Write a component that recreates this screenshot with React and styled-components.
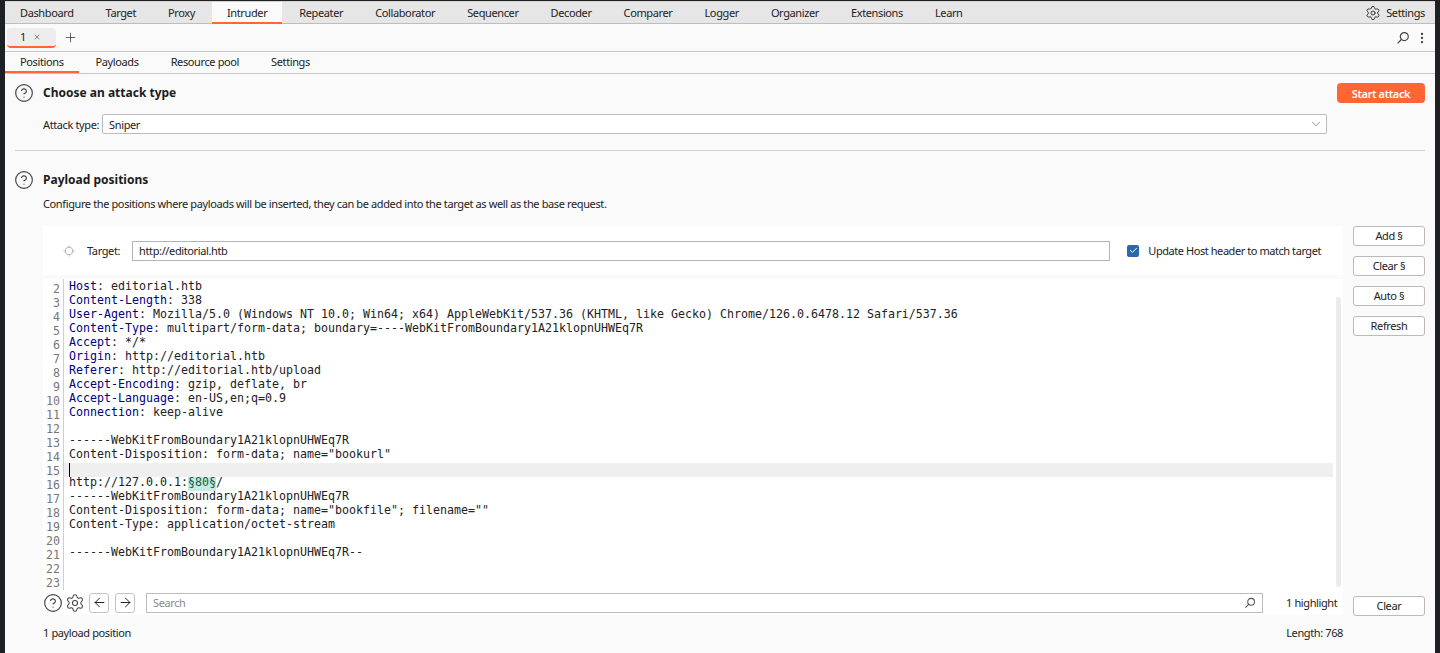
import React from 'react'
import styled, { createGlobalStyle } from 'styled-components'
import { ArrowLeft, ArrowRight, Check, ChevronDown, CircleHelp, EllipsisVertical, Plus, Settings, X } from 'lucide-react'

const Global = createGlobalStyle`
  html, body { margin: 0; padding: 0; background: #1f2023; overflow: hidden; }
  * { box-sizing: border-box; }
`

const Shell = styled.div`
  width: 1440px;
  height: 653px;
  padding: 1px 5px 0;
  font-family: "Noto Sans", sans-serif;
  font-size: 11px;
  letter-spacing: -0.38px;
  color: #222;
`
const Window = styled.div`
  height: 652px;
  background: #fafafa;
  display: flex;
  flex-direction: column;
`
const TopNav = styled.div`
  height: 23px;
  flex: none;
  display: flex;
  gap: 2px;
  background: #e6e6e6;
  border-top: 1px solid #d4d4d4;
  border-bottom: 1px solid #bdbdbd;
`
const NavTab = styled.div`
  padding: 0 15px;
  display: flex;
  align-items: center;
  height: 22px;
  background: ${p => (p.$active ? '#fafafa' : 'transparent')};
  border-bottom: ${p => (p.$active ? '2px solid #ff6633' : '2px solid transparent')};
`
const NavSettings = styled.div`
  margin-left: auto;
  display: flex;
  align-items: center;
  gap: 5px;
  padding-right: 10px;
`
const InstanceRow = styled.div`
  height: 28px;
  flex: none;
  display: flex;
  align-items: center;
  padding-left: 2px;
  border-bottom: 1px solid #c8c8c8;
`
const InstanceTab = styled.div`
  width: 49px;
  height: 20px;
  display: flex;
  align-items: center;
  padding-left: 13px;
  gap: 7px;
  background: #ededed;
  border-radius: 4px;
  border-bottom: 2px solid #ff6633;
`
const AddTab = styled.div`
  margin-left: 7px;
  display: flex;
  color: #333;
`
const InstanceTools = styled.div`
  margin-left: auto;
  display: flex;
  align-items: center;
  gap: 5px;
  padding-right: 6px;
  color: #444;
`
const SubNav = styled.div`
  height: 22px;
  flex: none;
  display: flex;
  gap: 2px;
  border-bottom: 1px solid #c8c8c8;
`
const SubTab = styled.div`
  padding: 0 15px;
  height: 21px;
  display: flex;
  align-items: center;
  border-bottom: ${p => (p.$active ? '2px solid #ff6633' : '2px solid transparent')};
`
const AttackSection = styled.div`
  flex: none;
  height: 77px;
  padding-top: 9px;
  margin: 0 10px;
  border-bottom: 1px solid #d2d2d2;
`
const HeadRow = styled.div`
  display: flex;
  align-items: center;
  height: 20px;
`
const HelpSlot = styled.div`
  width: 28px;
  margin: -1px 0 0 -1px;
  padding-right: 0;
  flex: none;
  display: flex;
  color: #444;
  & + div { margin-left: 1px; }
`
const Heading = styled.div`
  font-size: 12px;
  font-weight: 700;
  letter-spacing: 0;
  color: #1c1c1c;
  margin-top: -2px;
`
const StartButton = styled.button`
  margin-left: auto;
  width: 88px;
  height: 20px;
  border: 0;
  border-radius: 4px;
  background: #ff6633;
  color: #fff;
  font: 600 11px "Noto Sans", sans-serif;
  letter-spacing: -0.38px;
  padding: 0;
`
const TypeRow = styled.div`
  margin-top: 11px;
  padding-left: 28px;
  padding-right: 98px;
  display: flex;
  align-items: center;
  gap: 3px;
`
const Select = styled.div`
  flex: 1;
  height: 20px;
  display: flex;
  align-items: center;
  justify-content: space-between;
  padding: 0 3px 0 6px;
  background: #fff;
  border: 1px solid #bcbcbc;
  border-radius: 2px;
`
const PositionSection = styled.div`
  flex: none;
  padding: 19px 0 0 10px;
`
const Description = styled.div`
  margin: 6px 0 0 28px;
  height: 16px;
  line-height: 16px;
`
const Workspace = styled.div`
  flex: 1;
  min-height: 0;
  display: flex;
  padding: 14px 10px 0 38px;
  gap: 10px;
`
const MainColumn = styled.div`
  flex: 1;
  min-width: 0;
  display: flex;
  flex-direction: column;
`
const TargetRow = styled.div`
  height: 49px;
  flex: none;
  display: flex;
  align-items: center;
  background: #fff;
  padding: 0 22px 0 20px;
`
const TargetLabel = styled.div`
  margin-left: 12px;
  margin-right: 12px;
`
const TargetInput = styled.div`
  flex: 1;
  height: 20px;
  display: flex;
  align-items: center;
  padding: 0 6px;
  background: #fff;
  border: 1px solid #b4b4b4;
`
const CheckBox = styled.div`
  width: 12px;
  height: 12px;
  margin-left: 17px;
  margin-right: 9px;
  display: flex;
  align-items: center;
  justify-content: center;
  background: #2a6aa8;
  border-radius: 2px;
  color: #fff;
`
const HostLabel = styled.span`
  letter-spacing: -0.44px;
`
const EditorWrap = styled.div`
  margin-top: 4px;
  height: 311px;
  flex: none;
  background: #fff;
  display: flex;
`
const Gutter = styled.div`
  width: 21px;
  flex: none;
  padding: 2px 3px 0 0;
  border-right: 1px solid #cfcfcf;
  color: #777;
  text-align: right;
`
const Code = styled.div`
  flex: 1;
  min-width: 0;
  padding-top: 2px;
`
const CodeLine = styled.div`
  height: 14px;
  line-height: 10px;
  padding-left: 5px;
  white-space: pre;
  font-family: "DejaVu Sans Mono", monospace;
  font-size: 11.63px;
  letter-spacing: 0;
  background: ${p => (p.$current ? '#efefef' : 'transparent')};
  position: relative;
`
const GutterLine = styled.div`
  height: 14px;
  line-height: 16px;
  font-family: "DejaVu Sans Mono", monospace;
  font-size: 11.63px;
  letter-spacing: 0;
`
const Key = styled.span`
  color: #000080;
`
const Mark = styled.span`
  display: inline-block;
  height: 14px;
  background: #c4ece0;
  color: #1a5a4a;
`
const Caret = styled.span`
  position: absolute;
  left: 5px;
  top: 0;
  width: 1px;
  height: 14px;
  background: #000;
`
const ScrollTrack = styled.div`
  width: 10px;
  flex: none;
  padding: 18px 2px 0 3px;
`
const ScrollThumb = styled.div`
  width: 5px;
  height: 290px;
  background: #ebebeb;
  border-radius: 3px;
`
const SearchRow = styled.div`
  height: 25px;
  flex: none;
  display: flex;
  align-items: center;
  background: #fff;
  color: #444;
`
const IconSlot = styled.div`
  display: flex;
  margin-right: ${p => p.$gap}px;
`
const ArrowButton = styled.div`
  width: 20px;
  height: 20px;
  margin-right: 6px;
  display: flex;
  align-items: center;
  justify-content: center;
  border: 1px solid #c4c4c4;
  border-radius: 3px;
  color: #222;
`
const SearchBox = styled.div`
  width: 1117px;
  height: 20px;
  margin-left: 5px;
  display: flex;
  align-items: center;
  justify-content: space-between;
  padding: 0 6px;
  background: #fff;
  border: 1px solid #bcbcbc;
  color: #8a8a8a;
`
const Highlights = styled.div`
  margin-left: 23px;
  white-space: nowrap;
  color: #222;
`
const StatusRow = styled.div`
  height: 34px;
  display: flex;
  align-items: center;
  justify-content: space-between;
`
const SideColumn = styled.div`
  width: 72px;
  flex: none;
  display: flex;
  flex-direction: column;
`
const SideButton = styled.button`
  width: 72px;
  height: 20px;
  margin-bottom: 10px;
  padding: 0 0 2px;
  background: #fff;
  border: 1px solid #bdb9b9;
  border-radius: 3px;
  color: #222;
  font: 11px "Noto Sans", sans-serif;
  letter-spacing: -0.38px;
`
const ClearButton = styled(SideButton)`
  margin-top: auto;
  margin-bottom: 37px;
`

const navTabs = ['Dashboard', 'Target', 'Proxy', 'Intruder', 'Repeater', 'Collaborator', 'Sequencer', 'Decoder', 'Comparer', 'Logger', 'Organizer', 'Extensions', 'Learn']
const subTabs = ['Positions', 'Payloads', 'Resource pool', 'Settings']

const lines = [
  ['Host', ' editorial.htb'],
  ['Content-Length', ' 338'],
  ['User-Agent', ' Mozilla/5.0 (Windows NT 10.0; Win64; x64) AppleWebKit/537.36 (KHTML, like Gecko) Chrome/126.0.6478.12 Safari/537.36'],
  ['Content-Type', ' multipart/form-data; boundary=----WebKitFromBoundary1A21klopnUHWEq7R'],
  ['Accept', ' */*'],
  ['Origin', ' http://editorial.htb'],
  ['Referer', ' http://editorial.htb/upload'],
  ['Accept-Encoding', ' gzip, deflate, br'],
  ['Accept-Language', ' en-US,en;q=0.9'],
  ['Connection', ' keep-alive'],
  [null, ''],
  [null, '------WebKitFromBoundary1A21klopnUHWEq7R'],
  [null, 'Content-Disposition: form-data; name="bookurl"'],
  [null, '', 'caret'],
  [null, 'http://127.0.0.1:', 'mark'],
  [null, '------WebKitFromBoundary1A21klopnUHWEq7R'],
  [null, 'Content-Disposition: form-data; name="bookfile"; filename=""'],
  [null, 'Content-Type: application/octet-stream'],
  [null, ''],
  [null, '------WebKitFromBoundary1A21klopnUHWEq7R--'],
  [null, ''],
  [null, ''],
]

const MirroredSearch = ({ size = 14, color = 'currentColor' }) => (
  <svg width={size} height={size} viewBox="0 0 14 14" fill="none" stroke={color} strokeWidth="1.2">
    <circle cx="8.3" cy="5.6" r="4" />
    <path d="M5.4 8.5L1.6 12.4" />
  </svg>
)

const TargetIcon = () => (
  <svg width="12" height="12" viewBox="0 0 12 12" fill="none" stroke="#b5b5b5" strokeWidth="1">
    <circle cx="6" cy="6" r="3.8" />
    <path d="M6 0.5V2.5M6 9.5V11.5M0.5 6H2.5M9.5 6H11.5" />
  </svg>
)

export default function App() {
  return (
    <Shell>
      <Global />
      <Window>
        <TopNav>
          {navTabs.map(t => <NavTab key={t} $active={t === 'Intruder'}>{t}</NavTab>)}
          <NavSettings><Settings size={16} strokeWidth={1.3} />Settings</NavSettings>
        </TopNav>
        <InstanceRow>
          <InstanceTab>1<X size={8} strokeWidth={1.6} /></InstanceTab>
          <AddTab><Plus size={15} strokeWidth={1.2} /></AddTab>
          <InstanceTools><MirroredSearch /><EllipsisVertical size={14} strokeWidth={2} /></InstanceTools>
        </InstanceRow>
        <SubNav>
          {subTabs.map(t => <SubTab key={t} $active={t === 'Positions'}>{t}</SubTab>)}
        </SubNav>
        <AttackSection>
          <HeadRow>
            <HelpSlot><CircleHelp size={20} strokeWidth={1.4} /></HelpSlot>
            <Heading>Choose an attack type</Heading>
            <StartButton>Start attack</StartButton>
          </HeadRow>
          <TypeRow>
            Attack type:
            <Select>Sniper<ChevronDown size={14} strokeWidth={1.1} color="#555" /></Select>
          </TypeRow>
        </AttackSection>
        <PositionSection>
          <HeadRow>
            <HelpSlot><CircleHelp size={20} strokeWidth={1.4} /></HelpSlot>
            <Heading>Payload positions</Heading>
          </HeadRow>
          <Description>Configure the positions where payloads will be inserted, they can be added into the target as well as the base request.</Description>
        </PositionSection>
        <Workspace>
          <MainColumn>
            <TargetRow>
              <TargetIcon />
              <TargetLabel>Target:</TargetLabel>
              <TargetInput>http://editorial.htb</TargetInput>
              <CheckBox><Check size={9} strokeWidth={2.6} /></CheckBox>
              <HostLabel>Update Host header to match target</HostLabel>
            </TargetRow>
            <EditorWrap>
              <Gutter>
                {lines.map((_, i) => <GutterLine key={i}>{i + 2}</GutterLine>)}
              </Gutter>
              <Code>
                {lines.map(([k, v, kind], i) => (
                  <CodeLine key={i} $current={kind === 'caret'}>
                    {k && <><Key>{k}</Key>:</>}{v}
                    {kind === 'caret' && <Caret />}
                    {kind === 'mark' && <><Mark>§80§</Mark>/</>}
                  </CodeLine>
                ))}
              </Code>
              <ScrollTrack><ScrollThumb /></ScrollTrack>
            </EditorWrap>
            <SearchRow>
              <IconSlot $gap={2}><CircleHelp size={20} strokeWidth={1.4} /></IconSlot>
              <IconSlot $gap={4}><Settings size={20} strokeWidth={1.3} /></IconSlot>
              <ArrowButton><ArrowLeft size={15} strokeWidth={1.6} /></ArrowButton>
              <ArrowButton><ArrowRight size={15} strokeWidth={1.6} /></ArrowButton>
              <SearchBox>Search<MirroredSearch size={12} color="#555" /></SearchBox>
              <Highlights>1 highlight</Highlights>
            </SearchRow>
            <StatusRow>
              <span>1 payload position</span>
              <span>Length: 768</span>
            </StatusRow>
          </MainColumn>
          <SideColumn>
            <SideButton>Add §</SideButton>
            <SideButton>Clear §</SideButton>
            <SideButton>Auto §</SideButton>
            <SideButton>Refresh</SideButton>
            <ClearButton>Clear</ClearButton>
          </SideColumn>
        </Workspace>
      </Window>
    </Shell>
  )
}
